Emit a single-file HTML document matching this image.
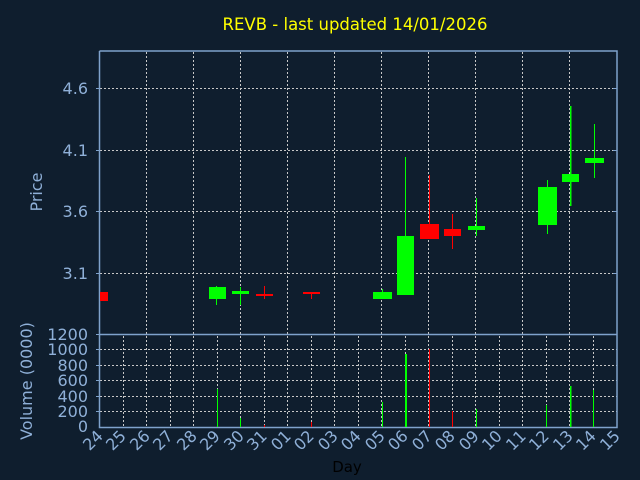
<!DOCTYPE html>
<html><head><style>
html,body{margin:0;padding:0;background:#0f1e2e;}
svg{display:block;font-family:"DejaVu Sans","Liberation Sans",sans-serif;}
</style></head><body>
<svg width="640" height="480" xmlns="http://www.w3.org/2000/svg">
<rect width="640" height="480" fill="#0f1e2e"/>
<text x="355" y="30" fill="#ffff00" font-size="16.5" text-anchor="middle">REVB - last updated 14/01/2026</text>
<g stroke="#c8c8c8" stroke-width="1" stroke-dasharray="2,2" fill="none">
<path d="M146.5 52V334M193.5 52V334M240.5 52V334M287.5 52V334M334.5 52V334M381.5 52V334M428.5 52V334M475.5 52V334M522.5 52V334M569.5 52V334"/>
<path d="M100 88.5H617M100 150.5H617M100 211.5H617M100 273.5H617"/>
<path d="M123.5 336V427M146.5 336V427M170.5 336V427M193.5 336V427M217.5 336V427M240.5 336V427M264.5 336V427M287.5 336V427M311.5 336V427M334.5 336V427M358.5 336V427M381.5 336V427M405.5 336V427M428.5 336V427M452.5 336V427M475.5 336V427M499.5 336V427M522.5 336V427M546.5 336V427M569.5 336V427M593.5 336V427"/>
<path d="M100 349.5H617M100 365.5H617M100 380.5H617M100 396.5H617M100 411.5H617"/>
</g>
<g stroke="#7fa2cc" stroke-width="1.5" fill="none">
<path d="M99.5 51V427.5H617V51H99.5M99.5 334.5H617"/>
</g>
<g stroke="#7fa2cc" stroke-width="1">
<path d="M96 88.5h4M96 150.5h4M96 211.5h4M96 273.5h4M96 334.5h4M96 349.5h4M96 365.5h4M96 380.5h4M96 396.5h4M96 411.5h4M613 88.5h4M613 150.5h4M613 211.5h4M613 273.5h4"/>
</g>
<g fill="#8fb0d8" font-size="16" text-anchor="end">
<text x="88" y="94">4.6</text><text x="88" y="156">4.1</text><text x="88" y="217">3.6</text><text x="88" y="279">3.1</text>
<text x="88" y="340">1200</text><text x="88" y="355">1000</text><text x="88" y="371">800</text><text x="88" y="386">600</text><text x="88" y="402">400</text><text x="88" y="417">200</text><text x="88" y="432">0</text>
</g>
<text transform="translate(42,192) rotate(-90)" fill="#8fb0d8" font-size="16" text-anchor="middle">Price</text>
<text transform="translate(32,381) rotate(-90)" fill="#8fb0d8" font-size="16" text-anchor="middle">Volume (0000)</text>
<text x="347" y="472" fill="#000" font-size="15" text-anchor="middle">Day</text>
<g fill="#8fb0d8" font-size="16">
<text transform="translate(104,437) rotate(-45)" text-anchor="end">24</text>
<text transform="translate(127,437) rotate(-45)" text-anchor="end">25</text>
<text transform="translate(151,437) rotate(-45)" text-anchor="end">26</text>
<text transform="translate(174,437) rotate(-45)" text-anchor="end">27</text>
<text transform="translate(198,437) rotate(-45)" text-anchor="end">28</text>
<text transform="translate(221,437) rotate(-45)" text-anchor="end">29</text>
<text transform="translate(245,437) rotate(-45)" text-anchor="end">30</text>
<text transform="translate(268,437) rotate(-45)" text-anchor="end">31</text>
<text transform="translate(292,437) rotate(-45)" text-anchor="end">01</text>
<text transform="translate(315,437) rotate(-45)" text-anchor="end">02</text>
<text transform="translate(339,437) rotate(-45)" text-anchor="end">03</text>
<text transform="translate(362,437) rotate(-45)" text-anchor="end">04</text>
<text transform="translate(386,437) rotate(-45)" text-anchor="end">05</text>
<text transform="translate(409,437) rotate(-45)" text-anchor="end">06</text>
<text transform="translate(433,437) rotate(-45)" text-anchor="end">07</text>
<text transform="translate(456,437) rotate(-45)" text-anchor="end">08</text>
<text transform="translate(480,437) rotate(-45)" text-anchor="end">09</text>
<text transform="translate(503,437) rotate(-45)" text-anchor="end">10</text>
<text transform="translate(527,437) rotate(-45)" text-anchor="end">11</text>
<text transform="translate(550,437) rotate(-45)" text-anchor="end">12</text>
<text transform="translate(574,437) rotate(-45)" text-anchor="end">13</text>
<text transform="translate(597,437) rotate(-45)" text-anchor="end">14</text>
<text transform="translate(621,437) rotate(-45)" text-anchor="end">15</text>
</g>
<g>
<rect x="100" y="292" width="8" height="9" fill="#ff0000"/>
<rect x="216" y="286" width="1" height="19" fill="#00ff00"/><rect x="209" y="287" width="17" height="12" fill="#00ff00"/>
<rect x="240" y="287" width="1" height="18" fill="#00ff00"/><rect x="232" y="291" width="17" height="3" fill="#00ff00"/>
<rect x="264" y="286" width="1" height="13" fill="#ff0000"/><rect x="256" y="294" width="17" height="2" fill="#ff0000"/>
<rect x="311" y="292" width="1" height="7" fill="#ff0000"/><rect x="303" y="292" width="17" height="2" fill="#ff0000"/>
<rect x="382" y="289" width="1" height="5" fill="#00ff00"/><rect x="373" y="292" width="19" height="7" fill="#00ff00"/>
<rect x="405" y="157" width="1" height="80" fill="#00ff00"/><rect x="397" y="236" width="17" height="59" fill="#00ff00"/>
<rect x="429" y="175" width="1" height="50" fill="#ff0000"/><rect x="420" y="224" width="19" height="15" fill="#ff0000"/>
<rect x="452" y="214" width="1" height="35" fill="#ff0000"/><rect x="444" y="229" width="17" height="7" fill="#ff0000"/>
<rect x="476" y="198" width="1" height="38" fill="#00ff00"/><rect x="468" y="226" width="17" height="4" fill="#00ff00"/>
<rect x="547" y="180" width="1" height="54" fill="#00ff00"/><rect x="538" y="187" width="19" height="38" fill="#00ff00"/>
<rect x="570" y="106" width="1.5" height="100" fill="#00ff00"/><rect x="562" y="174" width="17" height="8" fill="#00ff00"/>
<rect x="594" y="124" width="1" height="54" fill="#00ff00"/><rect x="585" y="158" width="19" height="5" fill="#00ff00"/>
</g>
<g>
<rect x="217" y="389" width="1" height="38" fill="#00ff00"/>
<rect x="240" y="418" width="1" height="9" fill="#00ff00"/>
<rect x="264" y="425" width="1" height="2" fill="#ff0000"/>
<rect x="311" y="422" width="1" height="5" fill="#ff0000"/>
<rect x="382" y="402" width="1" height="25" fill="#00ff00"/>
<rect x="405" y="354" width="2" height="73" fill="#00ff00"/>
<rect x="429" y="349" width="1" height="78" fill="#ff0000"/>
<rect x="452" y="411" width="1" height="16" fill="#ff0000"/>
<rect x="476" y="409" width="1" height="18" fill="#00ff00"/>
<rect x="546" y="405" width="1" height="22" fill="#00ff00"/>
<rect x="570" y="386" width="1.5" height="41" fill="#00ff00"/>
<rect x="593" y="390" width="1" height="37" fill="#00ff00"/>
</g>
</svg>
</body></html>
